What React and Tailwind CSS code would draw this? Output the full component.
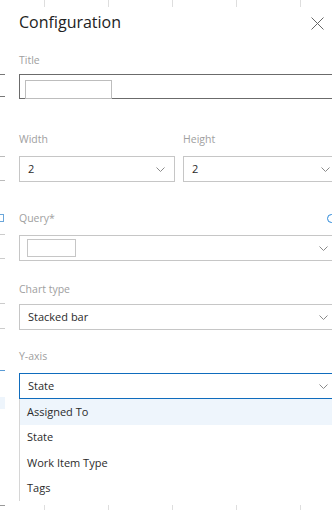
import { useState } from "react";

const font = { fontFamily: '"Open Sans", "Noto Sans", sans-serif' };

function Chevron() {
  return (
    <svg width="9" height="5" viewBox="0 0 9 5">
      <path d="M0.5 0.5 L4.5 4.5 L8.5 0.5" fill="none" stroke="#8a8a8a" strokeWidth="1" />
    </svg>
  );
}

function Label({ children, className = "" }) {
  return <div className={`text-[10.5px] leading-[14px] text-[#a0a0a0] ${className}`}>{children}</div>;
}

function Dropdown({ value, className = "", border = "border-[#c6c6c6]" }) {
  return (
    <div className={`flex h-[26px] items-center justify-between border ${border} bg-white pl-[8px] ${className}`}>
      <div className="text-[11px] text-[#2b2b2b]">{value}</div>
      <Chevron />
    </div>
  );
}

function GridStrip({ className = "" }) {
  return (
    <div className={`flex shrink-0 gap-[63px] pl-[44px] ${className}`}>
      {[0, 1, 2, 3, 4].map((i) => (
        <div key={i} className="h-full w-px bg-[#dedede]" />
      ))}
    </div>
  );
}

export default function App() {
  const [options] = useState(["Assigned To", "State", "Work Item Type", "Tags"]);

  return (
    <div className="flex h-[510px] w-[332px] flex-col overflow-hidden bg-white" style={font}>
      <GridStrip className="h-[7px]" />

      <div className="flex min-h-0 flex-1">
        {/* edge of the page behind the panel */}
        <div className="flex w-[6px] shrink-0 flex-col">
          <div className="mt-[67px] h-px w-[5px] bg-[#777]" />
          <div className="mt-[21px] h-px w-[5px] bg-[#777]" />
          <div className="mt-[59px] h-px w-[5px] bg-[#bbb]" />
          <div className="mt-[23px] h-px w-[5px] bg-[#bbb]" />
          <div className="mt-[33px] h-[8px] w-[4px] border border-l-0 border-[#6aa6da]" />
          <div className="mt-[12px] h-px w-[5px] bg-[#ccc]" />
          <div className="mt-[23px] h-px w-[5px] bg-[#ccc]" />
          <div className="mt-[44px] h-px w-[5px] bg-[#ccc]" />
          <div className="mt-[24px] h-px w-[5px] bg-[#ccc]" />
          <div className="mt-[41px] h-px w-[5px] bg-[#5a9bd5]" />
          <div className="mt-[26px] h-[12px] w-[5px] bg-[#eef5fc]" />
        </div>

        {/* configuration panel */}
        <div className="w-[340px] shrink-0 overflow-hidden bg-white pl-[13px]">
          <div className="flex w-[321px] items-start justify-between pr-[16px] pt-[3px]">
            <div className="text-[16px] leading-[24px] text-[#222]">Configuration</div>
            <svg width="13" height="13" viewBox="0 0 13 13" className="mt-[7px]">
              <path d="M0.5 0.5 L12.5 12.5 M12.5 0.5 L0.5 12.5" stroke="#666" strokeWidth="1" />
            </svg>
          </div>

          <Label className="mt-[19px]">Title</Label>
          <div className="mt-[7px] flex h-[25px] w-[321px] items-end border border-[#6b6b6b] pl-[5px]">
            <div className="-mb-px h-[19px] w-[87px] border border-[#bdbdbd] bg-white" />
          </div>

          <div className="mt-[33px] flex w-[321px] gap-[8px]">
            <div className="w-[156px]">
              <Label>Width</Label>
              <Dropdown value="2" className="mt-[10px] pr-[9px]" />
            </div>
            <div className="w-[157px]">
              <Label>Height</Label>
              <Dropdown value="2" className="mt-[10px] pr-[9px]" />
            </div>
          </div>

          <div className="mt-[29px] flex w-[321px] items-center justify-between pr-[4px]">
            <Label>Query*</Label>
            <svg width="9" height="9" viewBox="0 0 9 9">
              <circle cx="4.5" cy="4.5" r="4" fill="none" stroke="#2b88d8" strokeWidth="1" />
            </svg>
          </div>
          <div className="mt-[10px] flex h-[26px] w-[321px] items-center justify-between border border-[#c6c6c6] pl-[7px] pr-[11px]">
            <div className="h-[18px] w-[49px] border border-[#c6c6c6]" />
            <Chevron />
          </div>

          <Label className="mt-[21px]">Chart type</Label>
          <Dropdown value="Stacked bar" className="mt-[8px] w-[321px] pr-[11px]" />

          <Label className="mt-[19px]">Y-axis</Label>
          <Dropdown value="State" className="mt-[10px] w-[321px] pr-[11px]" border="border-[#0f6cbd]" />

          <div className="w-[321px] border-l border-[#d6d6d6]">
            {options.map((o, i) => (
              <div
                key={o}
                className={`flex h-[25.5px] items-center pl-[7px] text-[11px] text-[#2b2b2b] ${i === 0 ? "bg-[#eef5fc]" : ""}`}
              >
                {o}
              </div>
            ))}
          </div>
        </div>
      </div>

      <div className="relative shrink-0">
        <GridStrip className="h-[5px]" />
        <div className="absolute left-0 top-0 h-px w-[5px] bg-[#999]" />
      </div>
    </div>
  );
}
